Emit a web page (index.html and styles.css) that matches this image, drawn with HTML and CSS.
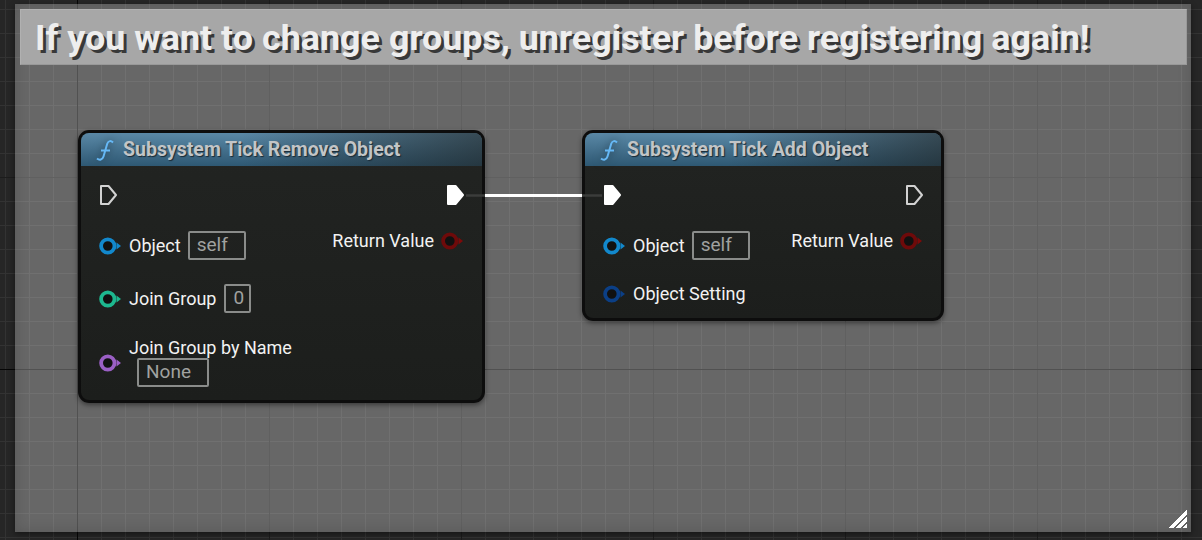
FILE: index.html
```html
<!DOCTYPE html>
<html lang="en">
<head>
<meta charset="utf-8">
<title>Blueprint comment</title>
<link rel="stylesheet" href="styles.css">
</head>
<body>
<main class="canvas">
  <section class="comment">
    <h1 class="comment-title">If you want to change groups, unregister before registering again!</h1>
    <svg class="grip" width="19" height="19" viewBox="0 0 19 19" shape-rendering="crispEdges"><path d="M0 19 19 0V5L5 19ZM7 19 19 7V12L12 19ZM14 19 19 14V19Z" fill="#fff"/></svg>
  </section>

  <article class="node node-remove">
    <header class="node-head">
      <svg class="fn" width="18" height="22" viewBox="0 0 18 22"><path d="M17 3.500C15 1.500 12.500 1.500 11.300 4.500L7.500 17.500C6.500 20.800 3.500 21.500 1 19.500M5 11.500H14" stroke="#66b8f5" stroke-width="2" fill="none"/></svg>
      <span>Subsystem Tick Remove Object</span>
    </header>
    <div class="node-body">
      <div class="col">
        <div class="row exec-row"><svg class="exec" width="20" height="22" viewBox="0 0 20 22"><path d="M2 2H9.500L17 11 9.500 20H2Z" fill="none" stroke="#d2d2d2" stroke-width="2" stroke-linejoin="round"/></svg></div>
        <div class="row data-row"><svg class="pin" width="23" height="18" viewBox="0 0 23 18"><circle cx="8.800" cy="9" r="6.700" fill="#111" stroke="#1288cc" stroke-width="3.800"/><path d="M17.500 5.500 22 9 17.500 12.500Z" fill="#1288cc"/></svg><span class="label">Object</span><span class="field field-self">self</span></div>
        <div class="row data-row"><svg class="pin" width="23" height="18" viewBox="0 0 23 18"><circle cx="8.800" cy="9" r="6.700" fill="#111" stroke="#1db88f" stroke-width="3.800"/><path d="M17.500 5.500 22 9 17.500 12.500Z" fill="#1db88f"/></svg><span class="label">Join Group</span><span class="field field-num">0</span></div>
        <div class="row name-row"><svg class="pin" width="23" height="18" viewBox="0 0 23 18"><circle cx="8.800" cy="9" r="6.700" fill="#111" stroke="#9a5fc4" stroke-width="3.800"/><path d="M17.500 5.500 22 9 17.500 12.500Z" fill="#9a5fc4"/></svg>
          <div class="stack"><span class="label">Join Group by Name</span><span class="field field-name">None</span></div>
        </div>
      </div>
      <div class="col col-right">
        <div class="row exec-row"><svg class="exec" width="20" height="22" viewBox="0 0 20 22"><path d="M2 2H9.500L17 11 9.500 20H2Z" fill="#fff" stroke="#fff" stroke-width="2" stroke-linejoin="round"/></svg></div>
        <div class="row return-row"><span class="label">Return Value</span><svg class="pin" width="23" height="18" viewBox="0 0 23 18"><circle cx="8.800" cy="9" r="6.700" fill="#111" stroke="#6e0a0a" stroke-width="3.800"/><path d="M17.500 5.500 22 9 17.500 12.500Z" fill="#7d0a0a"/></svg></div>
      </div>
    </div>
  </article>

  <article class="node node-add">
    <header class="node-head">
      <svg class="fn" width="18" height="22" viewBox="0 0 18 22"><path d="M17 3.500C15 1.500 12.500 1.500 11.300 4.500L7.500 17.500C6.500 20.800 3.500 21.500 1 19.500M5 11.500H14" stroke="#66b8f5" stroke-width="2" fill="none"/></svg>
      <span>Subsystem Tick Add Object</span>
    </header>
    <div class="node-body">
      <div class="col">
        <div class="row exec-row"><svg class="exec" width="20" height="22" viewBox="0 0 20 22"><path d="M2 2H9.500L17 11 9.500 20H2Z" fill="#fff" stroke="#fff" stroke-width="2" stroke-linejoin="round"/></svg></div>
        <div class="row data-row"><svg class="pin" width="23" height="18" viewBox="0 0 23 18"><circle cx="8.800" cy="9" r="6.700" fill="#111" stroke="#1288cc" stroke-width="3.800"/><path d="M17.500 5.500 22 9 17.500 12.500Z" fill="#1288cc"/></svg><span class="label">Object</span><span class="field field-self">self</span></div>
        <div class="row setting-row"><svg class="pin" width="23" height="18" viewBox="0 0 23 18"><circle cx="8.800" cy="9" r="6.700" fill="#111" stroke="#0b3f86" stroke-width="3.800"/><path d="M17.500 5.500 22 9 17.500 12.500Z" fill="#0b3f86"/></svg><span class="label">Object Setting</span></div>
      </div>
      <div class="col col-right">
        <div class="row exec-row"><svg class="exec" width="20" height="22" viewBox="0 0 20 22"><path d="M2 2H9.500L17 11 9.500 20H2Z" fill="none" stroke="#d2d2d2" stroke-width="2" stroke-linejoin="round"/></svg></div>
        <div class="row return-row"><span class="label">Return Value</span><svg class="pin" width="23" height="18" viewBox="0 0 23 18"><circle cx="8.800" cy="9" r="6.700" fill="#111" stroke="#6e0a0a" stroke-width="3.800"/><path d="M17.500 5.500 22 9 17.500 12.500Z" fill="#7d0a0a"/></svg></div>
      </div>
    </div>
  </article>

  <svg class="wire" width="1202" height="540" viewBox="0 0 1202 540">
    <path d="M466 195.500H485M582 195.500H602" stroke="#3b3d3b" stroke-width="2.500"/>
    <path d="M485 195.500H582" stroke="#fff" stroke-width="3"/>
  </svg>
</main>
</body>
</html>
```

FILE: styles.css
```css
html, body {
  margin: 0;
  padding: 0;
}

body {
  width: 1202px;
  height: 540px;
  overflow: hidden;
  font-family: Roboto, "Liberation Sans", sans-serif;
}

.canvas {
  position: relative;
  width: 1202px;
  height: 540px;
  overflow: hidden;
  background-color: #262626;
  background-image:
    linear-gradient(#060606, #060606),
    linear-gradient(#060606, #060606),
    linear-gradient(to right, #1c1c1c 1px, transparent 1px),
    linear-gradient(to bottom, #1c1c1c 1px, transparent 1px),
    linear-gradient(to right, #333333 1px, transparent 1px),
    linear-gradient(to bottom, #333333 1px, transparent 1px);
  background-size: 1px 100%, 100% 1px, 192px 192px, 192px 192px, 24px 24px, 24px 24px;
  background-position: 77px 0, 0 369px, 77px 0, 0 177px, 5px 0, 0 9px;
  background-repeat: no-repeat, no-repeat, repeat, repeat, repeat, repeat;
}

.comment {
  position: absolute;
  left: 15px;
  top: 4px;
  width: 1176px;
  height: 528px;
  box-sizing: border-box;
  padding: 5px 4px 0 5px;
  background: rgba(255, 255, 255, 0.3);
  box-shadow: inset 0 0 14px rgba(0, 0, 0, 0.16), 0 2px 6px rgba(0, 0, 0, 0.45);
}

.comment-title {
  margin: 0;
  height: 56px;
  box-sizing: border-box;
  padding-left: 14px;
  background: #a7a7a7;
  border: 1px solid #b1b1b1;
  border-bottom-color: #999999;
  border-right-color: #999999;
  color: #eeeeee;
  font-size: 35.900px;
  font-weight: 700;
  line-height: 57px;
  white-space: nowrap;
  text-shadow: 3px 3px 0 #383838;
}

.grip {
  position: absolute;
  right: 4px;
  bottom: 4px;
}

.node {
  position: absolute;
  top: 130px;
  box-sizing: border-box;
  background: linear-gradient(to bottom, #222422, #1c1e1c);
  border: 3px solid #0d0d0d;
  border-radius: 11px;
  box-shadow: 0 2px 5px rgba(0, 0, 0, 0.45);
  overflow: hidden;
}

.node-remove {
  left: 78px;
  width: 407px;
  height: 273px;
}

.node-add {
  left: 582px;
  width: 362px;
  height: 191px;
}

.node-head {
  display: flex;
  align-items: center;
  gap: 9px;
  height: 33px;
  padding-left: 15px;
  background-image:
    linear-gradient(to right, rgba(31, 33, 31, 0) 40%, rgba(31, 33, 31, 0.6) 100%),
    linear-gradient(to bottom, #5a88a6, #2e5873);
  color: #c2c5c7;
  font-size: 19.500px;
  font-weight: 700;
  text-shadow: 1px 1px 1px #1a2a35;
  white-space: nowrap;
}

.fn {
  flex: none;
  filter: drop-shadow(0 0 4px #1f3a4c);
}

.node-body {
  display: flex;
  justify-content: space-between;
  padding: 18px 18px 0 18px;
}

.col {
  display: flex;
  flex-direction: column;
}

.col-right {
  align-items: flex-end;
}

.col-right .exec {
  margin-right: -2px;
}

.row {
  display: flex;
  align-items: center;
}

.exec-row {
  height: 22px;
}

.data-row {
  height: 29px;
  margin-top: 25px;
}

.data-row + .data-row {
  margin-top: 24px;
}

.name-row {
  height: 50px;
  margin-top: 25px;
}

.setting-row {
  height: 20px;
  margin-top: 24px;
}

.return-row {
  height: 20px;
  margin-top: 25px;
}

.exec {
  display: block;
}

.pin {
  flex: none;
  display: block;
}

.label {
  color: #f2f2f2;
  font-size: 18px;
  line-height: 20px;
  white-space: nowrap;
}

.data-row .pin,
.name-row .pin,
.setting-row .pin {
  margin-right: 7px;
}

.return-row .pin {
  margin-left: 7px;
}

.field {
  box-sizing: border-box;
  height: 29px;
  border: 2px solid #8a8c8a;
  border-radius: 2px;
  padding-left: 7px;
  color: #a0a2a0;
  font-size: 19px;
  line-height: 24px;
}

.field-self {
  width: 58px;
  margin-left: 7px;
}

.field-num {
  width: 27px;
  margin-left: 8px;
}

.field-name {
  width: 72px;
  margin-left: 8px;
}

.stack {
  display: flex;
  flex-direction: column;
  align-items: flex-start;
  margin-top: -1px;
}

.wire {
  position: absolute;
  left: 0;
  top: 0;
  pointer-events: none;
}
```
